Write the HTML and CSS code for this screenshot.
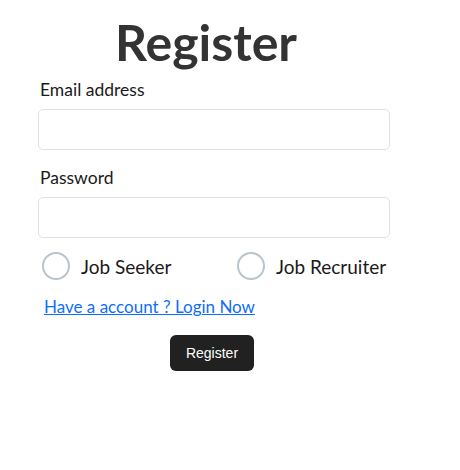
FILE: index.html
```html
<!DOCTYPE html>
<html>
<head>
<meta charset="utf-8">
<link rel="stylesheet" href="styles.css">
</head>
<body>
<form class="form">
  <h1 class="title">Register</h1>
  <div class="field">
    <label class="label" for="email">Email address</label>
    <input class="input" id="email" type="email">
  </div>
  <div class="field">
    <label class="label" for="pw">Password</label>
    <input class="input" id="pw" type="password">
  </div>
  <div class="roles">
    <label class="role"><span class="radio"></span>Job Seeker</label>
    <label class="role"><span class="radio"></span>Job Recruiter</label>
  </div>
  <a class="link" href="#">Have a account ? Login Now</a>
  <div class="actions">
    <button class="btn" type="button">Register</button>
  </div>
</form>
</body>
</html>
```

FILE: styles.css
```css
* { box-sizing: border-box; }
body {
  margin: 0;
  background: #fff;
  font-family: Lato, "Noto Sans", sans-serif;
  color: #212529;
}
.form {
  width: 352px;
  margin-left: 38px;
  display: flex;
  flex-direction: column;
}
.title {
  margin: 12px 0 6px 0;
  font-size: 50px;
  font-weight: 700;
  color: #333;
  line-height: 60px;
  text-align: center;
  padding-right: 16px;
}
.field {
  display: flex;
  flex-direction: column;
}
.label {
  font-size: 17.5px;
  line-height: 24px;
  margin: 0 0 7px 2px;
  color: #1a1a1a;
}
.input {
  height: 41px;
  border: 1px solid #dee2e6;
  border-radius: 5px;
  margin: 0 0 16px 0;
  font: inherit;
}
.roles {
  display: flex;
  margin-top: -2px;
}
.role {
  display: flex;
  align-items: center;
  font-size: 19px;
  color: #1a1a1a;
  flex: none;
}
.role:first-child { width: 195px; }
.radio {
  width: 28px;
  height: 28px;
  border: 2px solid #b8c4ce;
  border-radius: 50%;
  margin: 0 11px 0 4px;
}
.link {
  margin: 16px 0 0 6px;
  font-size: 17px;
  color: #0d6efd;
  text-decoration: underline;
  align-self: flex-start;
}
.actions {
  display: flex;
  justify-content: center;
  margin-top: 18px;
  padding-right: 4px;
}
.btn {
  width: 84px;
  height: 36px;
  background: #212121;
  color: #fff;
  border: none;
  border-radius: 6px;
  font-family: "Liberation Sans", Arial, sans-serif;
  font-size: 14px;
}
```
